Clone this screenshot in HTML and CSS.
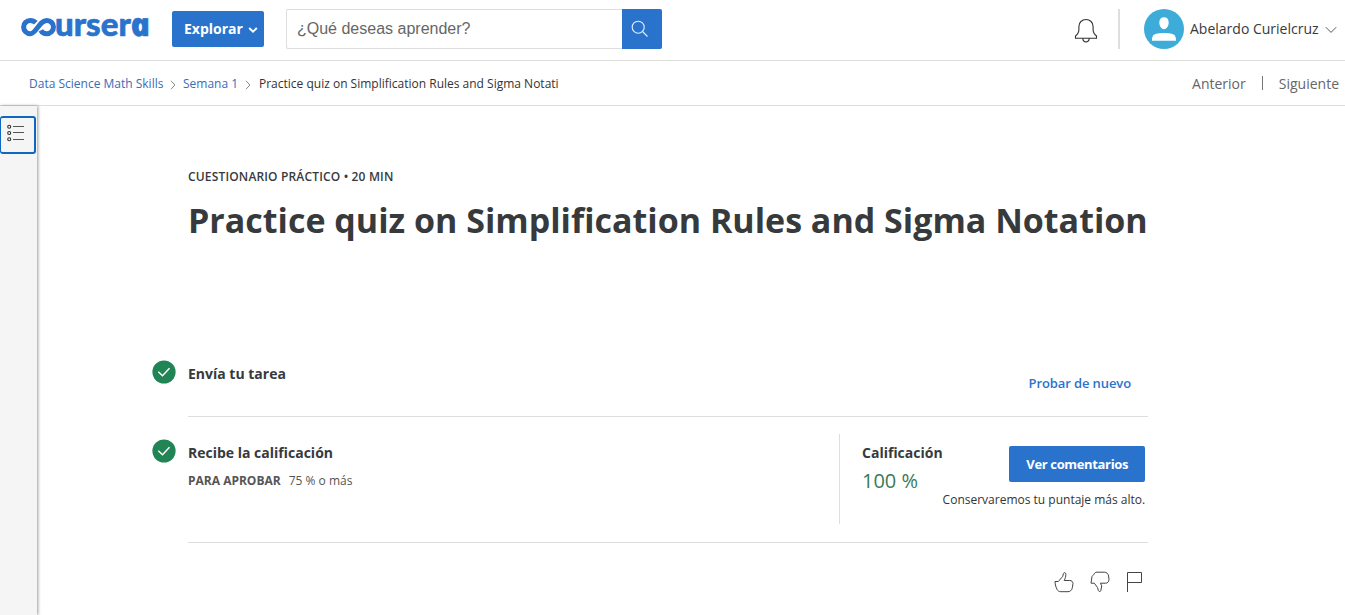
FILE: index.html
```html
<!DOCTYPE html>
<html lang="es">
<head>
<meta charset="utf-8">
<title>Coursera</title>
<link rel="stylesheet" href="styles.css">
</head>
<body>
<header class="topbar">
  <div class="logo" aria-label="coursera">
    <svg class="logo-mark" width="36" height="20" viewBox="0 0 36 20" fill="none" stroke="#2a73cc" stroke-width="5"><path d="M14.800 5.800C13.300 4.200 11.500 3.400 9.300 3.400a6.700 6.700 0 1 0 0 13.400C15.500 16.800 18 3.400 25.800 3.400a6.700 6.700 0 1 1 0 13.400c-2.700 0-4.900-1.300-6-3.400"/></svg>
    <span class="logo-text">urser<span class="logo-a">a</span></span>
  </div>
  <button class="explore"><span>Explorar</span><svg width="10" height="8" viewBox="0 0 10 8" fill="none" stroke="#fff" stroke-width="1.9"><path d="M1.2 2l3.8 3.6L8.8 2"/></svg></button>
  <div class="search">
    <span class="search-text">¿Qué deseas aprender?</span>
    <span class="search-btn"><svg width="18" height="18" viewBox="0 0 18 18" fill="none" stroke="#e4eefa" stroke-width="1.1"><circle cx="7.2" cy="7.2" r="6"/><path d="M11.5 11.5l5 5"/></svg></span>
  </div>
  <svg class="bell" width="24" height="26" viewBox="0 0 24 26" fill="none" stroke="#333" stroke-width="1.1"><path d="M1.5 20.3V18c2.6-2 3.4-3.700 3.400-6.500V8.500c0-4 3-7 7.100-7s7.100 3 7.100 7v3c0 2.800.8 4.500 3.400 6.500v2.300zM8.800 20.600c.2 2 1.400 3.300 3.200 3.300s3-1.300 3.200-3.300"/></svg>
  <div class="divider"></div>
  <svg class="avatar" width="40" height="40" viewBox="0 0 40 40"><circle cx="20" cy="20" r="20" fill="#3dacd8"/><path fill="#fff" d="M15.300 13.500c0-3.300 1.800-5.200 4.700-5.200s4.700 1.900 4.700 5.200-2 6.700-4.700 6.700-4.700-3.400-4.700-6.700zM8 31.700c0-3 .3-5.600 3.500-6.700 5-1.400 12-1.400 17 0 3.200 1.100 3.500 3.700 3.500 6.700z"/></svg>
  <span class="user">Abelardo Curielcruz</span>
  <svg class="user-arrow" width="12" height="8" viewBox="0 0 12 8" fill="none" stroke="#555" stroke-width="1"><path d="M.8 1.200L6 6.400l5.200-5.200"/></svg>
</header>
<nav class="crumbs">
  <a class="c1">Data Science Math Skills</a>
  <svg class="sep" width="6" height="10" viewBox="0 0 6 10" fill="none" stroke="#888"><path d="M1 .8L4.900 5 1 9.200"/></svg>
  <a class="c2">Semana 1</a>
  <svg class="sep" width="6" height="10" viewBox="0 0 6 10" fill="none" stroke="#888"><path d="M1 .8L4.900 5 1 9.200"/></svg>
  <span class="c3">Practice quiz on Simplification Rules and Sigma Notati</span>
  <span class="prev">Anterior</span><i class="bar"></i><span class="next">Siguiente</span>
</nav>
<div class="body">
  <aside class="rail"><div class="toc"><svg width="18" height="18" viewBox="0 0 18 18" fill="none" stroke="#333"><g stroke-width="1.100"><circle cx="2.200" cy="2.700" r="1.500"/><circle cx="2.200" cy="9" r="1.500"/><circle cx="2.200" cy="15.200" r="1.500"/></g><path stroke="#555" d="M6 2.500h11M6 8.500h11M6 15.500h11"/></svg></div></aside>
  <main class="main">
    <div class="kind">CUESTIONARIO PRÁCTICO • 20 MIN</div>
    <h1 class="title">Practice quiz on Simplification Rules and Sigma Notation</h1>
    <section class="row submit">
      <svg class="check" width="24" height="24" viewBox="0 0 24 24" fill="none"><circle cx="12" cy="12" r="11.600" fill="#208454"/><path d="M6.300 11.800l4.200 4 7-7.500" stroke="#fff" stroke-width="1.500"/></svg>
      <h2 class="label">Envía tu tarea</h2>
      <a class="retry">Probar de nuevo</a>
    </section>
    <section class="row grade">
      <svg class="check" width="24" height="24" viewBox="0 0 24 24" fill="none"><circle cx="12" cy="12" r="11.600" fill="#208454"/><path d="M6.300 11.800l4.200 4 7-7.500" stroke="#fff" stroke-width="1.500"/></svg>
      <div class="receive">
        <h2 class="label label-receive">Recibe la calificación</h2>
        <div class="pass"><b>PARA APROBAR</b><span>75 % o más</span></div>
      </div>
      <div class="result">
        <div class="score"><h2 class="label label-score">Calificación</h2><div class="pct">100 %</div></div>
        <div class="feedback"><button class="view">Ver comentarios</button><span class="keep">Conservaremos tu puntaje más alto.</span></div>
      </div>
    </section>
    <div class="reactions">
      <svg width="20" height="22" viewBox="0 0 20 22" fill="none" stroke="#444"><path d="M1 10.500h3.300l4.500-5.200.6-2.800c.4-1.300 2.500-1 2.500.7 0 2.300-.8 4.500-1.700 6.300h5.600c1.700 0 3 1 3.200 2.800l-.6 4.200c-.4 2.600-2.200 4.200-4.400 4.200H6.800c-1.600 0-3-.8-3.700-2.200-1-2-2-4.500-2.100-8z"/></svg>
      <svg width="20" height="22" viewBox="0 0 20 22" fill="none" stroke="#444"><path d="M1 12.200l1-6.700c.4-1 1.300-1.200 1.900-2.200.8-1.500 1.800-2.100 3.100-2.100h7.300c2.300 0 3.900 1.500 4.300 3.800l.4 3.700c-.2 2.200-1.600 3.500-3.300 3.500h-5.300l1.300 2.600-.8 4.600c-.3 1.500-2 1.500-2.500.1l-.9-3-3.200-4.300z"/></svg>
      <svg width="18" height="22" viewBox="0 0 18 22" fill="none" stroke="#444"><path d="M1.500 21V1.500h14v10h-14"/></svg>
    </div>
  </main>
</div>
</body>
</html>
```
FILE: styles.css
```css
* { box-sizing: border-box; }
body { margin: 0; height: 615px; overflow: hidden; background: #fff; color: #373a3c; font-family: "Open Sans", sans-serif; }
button { border: 0; font-family: inherit; padding: 0; }
h1, h2 { margin: 0; }
svg { flex: none; display: block; }
span, a { white-space: nowrap; }
.topbar { height: 61px; border-bottom: 1px solid #dedede; display: flex; align-items: flex-start; }
.logo { width: 151px; height: 40px; padding: 17px 0 0 21px; display: flex; flex: none; color: #2a73cc; }
.logo-text { margin: -4px 0 0 -2px; font: 900 33px/20px Lato, sans-serif; letter-spacing: 0; -webkit-text-stroke: .6px #2a73cc; }
.logo-a { display: inline-block; margin-left: -1px; font: italic 800 32px/20px "Open Sans", sans-serif; transform: skewX(12deg); }
.explore { width: 92px; height: 36px; margin: 11px 0 0 21px; border-radius: 2px; background: #2a73cc; color: #fff; font-size: 14px; font-weight: 700; display: flex; align-items: center; padding: 0 0 1px 12px; gap: 5px; flex: none; }
.explore svg { margin-top: 3px; }
.search { width: 376px; height: 40px; margin: 9px 0 0 22px; display: flex; flex: none; border: 1px solid #dedede; border-right: 0; border-radius: 2px; }
.search-text { flex: 1; padding-left: 10px; font: 16px/37px "Liberation Sans", sans-serif; color: #666; }
.search-btn { width: 40px; height: 40px; margin-top: -1px; background: #2a73cc; padding: 11px 0 0 9px; border-radius: 0 2px 2px 0; }
.bell { margin: 18px 0 0 auto; }
.divider { width: 2px; height: 40px; margin: 9px 24px 0 20px; background: #dedede; }
.avatar { margin-top: 9px; }
.user { width: 129px; margin: 19px 0 0 6px; font-size: 14px; line-height: 20px; }
.user-arrow { margin: 26px 8px 0 6px; }
.crumbs { height: 45px; border-bottom: 1px solid #dedede; display: flex; align-items: center; padding: 0 6px 0 29px; font-size: 12px; color: #333; }
.crumbs a { color: #3a6cb8; }
.c1 { width: 135px; }
.c2 { width: 55px; }
.c3 { margin-left: 1px; }
.sep { margin: 3px 7px 0 6px; }
.c2 + .sep { margin-left: 7px; }
.prev { margin-left: auto; }
.prev, .next { font-size: 14px; color: #666; }
.bar { width: 1px; height: 14px; margin: 0 16px; background: #777; }
.body { display: flex; height: 509px; }
.rail { width: 37px; background: #f5f5f5; box-shadow: 1px 0 3px rgba(0,0,0,.4); padding-top: 10px; flex: none; }
.toc { width: 36px; height: 38px; border: 2px solid #0f67c2; border-left-width: 1px; border-radius: 3px; padding: 6px 0 0 6px; }
.main { width: 960px; margin-left: 151px; padding-top: 61px; }
.kind { font-size: 12px; font-weight: 600; line-height: 20px; letter-spacing: .16px; }
.title { margin-top: 9px; font-size: 34px; line-height: 48px; font-weight: 700; white-space: nowrap; }
.row { display: flex; align-items: flex-start; border-bottom: 1px solid #dedede; }
.check { margin-left: -36px; }
.submit { margin-top: 110px; height: 63px; padding-top: 6px; }
.label { margin-left: 12px; font-size: 14px; line-height: 20px; font-weight: 700; white-space: nowrap; }
.submit .label { margin-top: 4px; }
.retry { margin: 13px 17px 0 auto; font-size: 13px; line-height: 20px; font-weight: 600; letter-spacing: -.1px; color: #2a73cc; }
.submit .check { margin-top: 0; }
.grade { height: 126px; padding-top: 17px; }
.grade .check { margin-top: 5px; }
.receive { padding-top: 9px; }
.pass { display: flex; gap: 8px; margin: 8px 0 0 12px; font-size: 12px; line-height: 20px; color: #555; }
.result { width: 309px; height: 90px; margin-left: auto; border-left: 1px solid #dedede; display: flex; }
.score { padding: 9px 0 0 22px; width: 103px; }
.label-score { margin-left: 0; }
.pct { margin-top: 4px; font-size: 20px; line-height: 28px; color: #3a7a58; white-space: nowrap; }
.feedback { flex: 1; display: flex; flex-direction: column; align-items: flex-end; padding: 12px 3px 0 0; }
.view { width: 136px; height: 36px; background: #2a73cc; color: #fff; font-size: 13px; font-weight: 700; letter-spacing: -.35px; border-radius: 2px; white-space: nowrap; }
.keep { margin-top: 8px; font-size: 12px; line-height: 20px; color: #333; }
.reactions { display: flex; justify-content: flex-end; gap: 17px; padding: 28px 4px 0 0; }
.reactions svg:last-child { margin-left: -1px; }
.reactions svg:first-child { margin-right: -1px; }
```
